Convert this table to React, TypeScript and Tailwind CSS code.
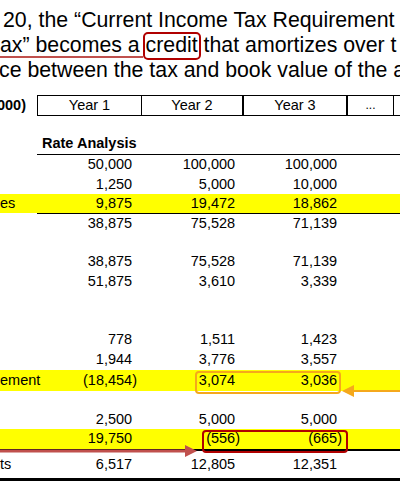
import React from "react";

type RowProps = {
  label?: string;
  v?: [string, string, string];
  h: string;
  yellow?: boolean;
};

function Num({ s }: { s: string }) {
  if (!s) return null;
  if (s.startsWith("(")) return <span>{s}</span>;
  return (
    <span>
      {s}
      <span className="invisible">)</span>
    </span>
  );
}

function Row({ label, v, h, yellow }: RowProps) {
  return (
    <div className={`flex items-center ${h} ${yellow ? "bg-[#ffff00]" : ""}`}>
      <div className="w-[33px] whitespace-nowrap">{label}</div>
      <div className="w-[104px] text-right">{v && <Num s={v[0]} />}</div>
      <div className="w-[103px] text-right">{v && <Num s={v[1]} />}</div>
      <div className="w-[102px] text-right">{v && <Num s={v[2]} />}</div>
    </div>
  );
}

export default function App() {
  return (
    <div
      className="relative w-[400px] h-[492px] overflow-hidden bg-white text-black"
      style={{ fontFamily: '"Liberation Sans", Arial, sans-serif' }}
    >
      {/* Top paragraph */}
      <div className="text-[21.3px] whitespace-nowrap pt-[8px]">
        <div className="leading-[25px] h-[25px] pl-[3px]">
          20, the “Current Income Tax Requirement
        </div>
        <div className="leading-[25px] h-[25px]">
          ax” becomes a{" "}
          <span className="relative">
            credit
            <span className="absolute left-[-3px] right-[-3px] top-[-1px] bottom-[-3px] border-2 border-[#b00000] rounded-[5px]" />
          </span>{" "}
          that amortizes over t
        </div>
        <div className="leading-[25px] h-[25px] ml-[-1px]">
          ce between the tax and book value of the a
        </div>
      </div>

      {/* red underline under line 2 */}
      <div className="absolute left-0 top-[56px] w-[143px] h-[2px] bg-[#c0504d]" />

      {/* Table */}
      <div className="text-[14.5px]">
        {/* Header row */}
        <div className="flex h-[21px] mt-[12px]">
          <div className="w-[26px] flex justify-end items-center font-bold whitespace-nowrap">
            (000)
          </div>
          <div className="w-[11px]" />
          <div className="flex-1 flex border border-black border-r-0">
            <div className="w-[104px] border-r border-black flex items-center justify-center">
              Year 1
            </div>
            <div className="w-[102px] border-r-2 border-black flex items-center justify-center">
              Year 2
            </div>
            <div className="w-[104px] border-r-2 border-black flex items-center justify-center">
              Year 3
            </div>
            <div className="w-[46px] border-r border-black flex items-end justify-center pb-[1px] text-[12px]">
              ...
            </div>
            <div className="flex-1" />
          </div>
        </div>

        {/* Rate Analysis */}
        <div className="ml-[37px] mt-[17px] h-[22px] border-b border-black font-bold leading-[21px] pl-[5px]">
          Rate Analysis
        </div>

        <Row h="h-[20px]" v={["50,000", "100,000", "100,000"]} />
        <Row h="h-[19px]" v={["1,250", "5,000", "10,000"]} />
        <Row h="h-[19px]" yellow label="es" v={["9,875", "19,472", "18,862"]} />
        <div className="ml-[37px] h-[1px] bg-black" />
        <Row h="h-[19px]" v={["38,875", "75,528", "71,139"]} />
        <Row h="h-[19px]" />
        <Row h="h-[20px]" v={["38,875", "75,528", "71,139"]} />
        <Row h="h-[19px]" v={["51,875", "3,610", "3,339"]} />
        <Row h="h-[20px]" />
        <Row h="h-[19px]" />
        <Row h="h-[20px]" v={["778", "1,511", "1,423"]} />
        <Row h="h-[20px]" v={["1,944", "3,776", "3,557"]} />
        <Row h="h-[21px]" yellow label="ement" v={["(18,454)", "3,074", "3,036"]} />
        <Row h="h-[19px]" />
        <Row h="h-[19px]" v={["2,500", "5,000", "5,000"]} />
        <Row h="h-[20px]" yellow v={["19,750", "(556)", "(665)"]} />
        <div className="h-[2px] bg-black" />
        <Row h="h-[27px]" label="ts" v={["6,517", "12,805", "12,351"]} />
        <div className="h-[3px] bg-black" />
      </div>

      {/* Orange box + arrow */}
      <div className="absolute left-[195px] top-[371px] w-[146px] h-[23px] border-2 border-[#f5a81c] rounded-[4px]" />
      <svg className="absolute left-[340px] top-[383px]" width="60" height="16" viewBox="0 0 60 16">
        <polygon points="2,8 14,2 14,14" fill="#f5a81c" />
        <rect x="13" y="7" width="47" height="2" fill="#f5a81c" />
      </svg>

      {/* Red box + arrow */}
      <div className="absolute left-[202px] top-[430px] w-[146px] h-[23px] border-2 border-[#b00000] rounded-[4px]" />
      <svg className="absolute left-0 top-[443px]" width="200" height="16" viewBox="0 0 200 16">
        <rect x="0" y="6.5" width="187" height="3" fill="#c0504d" />
        <polygon points="185,2 197,8 185,14" fill="#c0504d" />
      </svg>
    </div>
  );
}
